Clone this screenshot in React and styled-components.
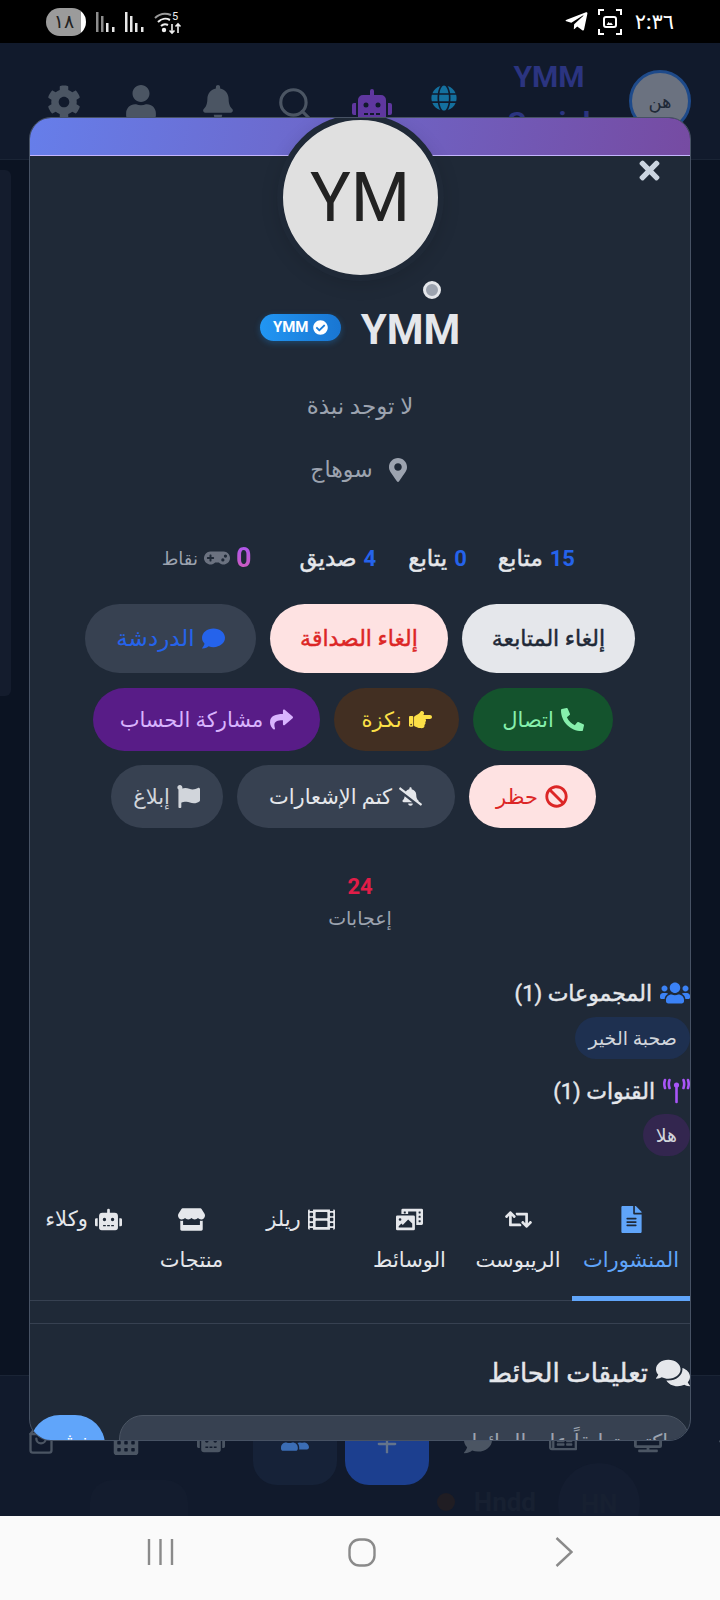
import React from "react"
import styled, { createGlobalStyle, css } from "styled-components"
import {
  FaBan, FaBell, FaBellSlash, FaCalendarAlt, FaCheckCircle, FaCog, FaComment, FaComments,
  FaFileAlt, FaFilm, FaFlag, FaGamepad, FaGlobe, FaHandPointRight, FaHome, FaMapMarkerAlt,
  FaPhoneAlt, FaPhotoVideo, FaRegNewspaper, FaRetweet, FaRobot, FaShare,
  FaStore, FaTelegramPlane, FaTimes, FaTv, FaUser, FaUserFriends, FaUsers,
} from "react-icons/fa"
import { FiPlus, FiSearch, FiShoppingBag } from "react-icons/fi"

const Global = createGlobalStyle`
  html, body { margin: 0; padding: 0; background: #000; }
  #root { width: 720px; height: 1600px; overflow: hidden; }
  * { box-sizing: border-box; }
`

// DejaVu's bold Arabic is far heavier than the reference, so thicken the regular cut a little
const semiBold = css`
  font-weight: 400;
  -webkit-text-stroke: 0.45px currentColor;
`

const Phone = styled.div`
  width: 720px;
  height: 1600px;
  display: flex;
  flex-direction: column;
  font-family: Roboto, "Noto Sans", "DejaVu Sans", sans-serif;
`

const StatusBar = styled.div`
  height: 43px;
  background: #000;
  display: flex;
  align-items: center;
  justify-content: space-between;
  padding: 0 46px;
  color: #fff;
  flex: none;
`

const StatusGroup = styled.div`
  display: flex;
  align-items: center;
  gap: ${(p) => p.$gap || 8}px;
`

const BatteryPill = styled.div`
  width: 40px;
  height: 28px;
  margin-right: 2px;
  border-radius: 14px;
  background: linear-gradient(90deg, #9b9b9b 88%, #fff 88%);
  color: #222;
  font-size: 19px;
  display: flex;
  align-items: center;
  justify-content: center;
  padding-right: 4px;
`

const Clock = styled.div`
  font-size: 21px;
  font-weight: 500;
  margin-left: 4px;
  direction: rtl;
`

const Screen = styled.div`
  position: relative;
  flex: 1;
  display: flex;
  flex-direction: column;
  background: #0b1322;
  overflow: hidden;
`

const AppHeader = styled.div`
  height: 117px;
  background: #111a2c;
  border-bottom: 1px solid #1a2435;
  display: flex;
  align-items: flex-start;
  padding: 24px 29px 0 25px;
  flex: none;
`

const HeadIcon = styled.div`
  width: ${(p) => p.$w || 77}px;
  padding-top: 18px;
  display: flex;
  justify-content: center;
  font-size: ${(p) => p.$size || 34}px;
  color: ${(p) => p.$color || "#4b5563"};
`

const Brand = styled.div`
  width: 110px;
  margin: -13px 0 0 17px;
  text-align: center;
  font-size: 30px;
  font-weight: 700;
  line-height: 46px;
  color: #2b3480;
`

const SmallAvatar = styled.div`
  width: 62px;
  height: 62px;
  margin-left: auto;
  margin-top: 3px;
  border-radius: 50%;
  border: 3px solid #1e4a8a;
  background: #6b7280;
  color: #1f2937;
  font-size: 18px;
  display: flex;
  align-items: center;
  justify-content: center;
`

const Body = styled.div`
  flex: 1;
  padding-top: 10px;
`

const Rail = styled.div`
  width: 11px;
  height: 526px;
  border-radius: 0 6px 6px 0;
  background: #141c2d;
`

const BottomNav = styled.div`
  height: 141px;
  background: #111a2c;
  border-top: 1px solid #1a2435;
  overflow: hidden;
  flex: none;
`

const NavRow = styled.div`
  height: 109px;
  display: flex;
  align-items: flex-end;
  margin-left: -2px;
`

const NavItem = styled.div`
  width: ${(p) => p.$w || 85}px;
  height: 100px;
  display: flex;
  justify-content: center;
  align-items: flex-end;
  padding-bottom: ${(p) => p.$pad || 30}px;
  flex: none;
  font-size: 28px;
  color: ${(p) => p.$color || "#4b5563"};
  background: ${(p) => p.$bg || "transparent"};
  border-radius: 24px;
  margin-right: ${(p) => p.$gap || 0}px;
`

const StoryRow = styled.div`
  margin-top: -22px;
  height: 60px;
  display: flex;
  align-items: flex-start;
  padding: 0 80px 0 90px;
  gap: 22px;
  color: #172031;
  font-size: 26px;
  font-weight: 700;
`

const StoryCard = styled.div`
  width: 98px;
  height: 60px;
  margin-top: 17px;
  margin-right: auto;
  border-radius: 22px;
  background: #131c2e;
`

const StoryName = styled.div`
  margin-top: 24px;
  display: flex;
  align-items: center;
  gap: 19px;
`

const StoryDot = styled.span`
  width: 18px;
  height: 18px;
  border-radius: 50%;
  background: #201d23;
`

const StoryAvatar = styled.div`
  width: 82px;
  height: 82px;
  border-radius: 50%;
  background: #141d30;
  display: flex;
  align-items: center;
  justify-content: center;
`

const Modal = styled.div`
  position: absolute;
  top: 74px;
  left: 29px;
  width: 662px;
  height: 1324px;
  background: #1f2937;
  border: 1px solid #475264;
  border-radius: 22px;
  overflow: hidden;
  direction: rtl;
`

const ModalTop = styled.div`
  height: 38px;
  background: linear-gradient(100deg, #667eea, #764ba2);
  border-bottom: 1px solid #c4b5fd;
`

const CloseButton = styled.div`
  position: absolute;
  top: 38px;
  left: 605px;
  color: #cbd5e1;
  font-size: 29px;
  line-height: 1;
`

const AvatarWrap = styled.div`
  position: relative;
  width: 167px;
  height: 167px;
  margin: -42px auto 0;
`

const Avatar = styled.div`
  width: 167px;
  height: 167px;
  border-radius: 50%;
  border: 6px solid #1f2937;
  background: #e0e0e0;
  color: #222;
  font-size: 68px;
  display: flex;
  align-items: center;
  justify-content: center;
  box-shadow: 0 4px 18px rgba(0, 0, 0, 0.12);
`

const StatusDot = styled.span`
  position: absolute;
  top: 167px;
  left: 146px;
  width: 18px;
  height: 18px;
  border-radius: 50%;
  border: 3px solid #e5e7eb;
  background: #9ca3af;
`

const NameRow = styled.div`
  margin-top: 23px;
  height: 50px;
  display: flex;
  align-items: center;
  justify-content: center;
  gap: 20px;
`

const Name = styled.div`
  font-size: 42px;
  font-weight: 700;
  color: #e5e7eb;
`

const Badge = styled.div`
  width: 81px;
  height: 27px;
  margin-top: -4px;
  border-radius: 14px;
  background: linear-gradient(90deg, #2196f3, #1976d2);
  box-shadow: 0 2px 6px rgba(33, 150, 243, 0.3);
  color: #fff;
  font-size: 15px;
  font-weight: 700;
  display: flex;
  align-items: center;
  justify-content: center;
  gap: 4px;
  direction: ltr;
`

const Bio = styled.div`
  margin-top: 38px;
  height: 30px;
  line-height: 30px;
  text-align: center;
  color: #9ca3af;
  font-size: 23px;
`

const Location = styled(Bio)`
  margin-top: 33px;
  display: flex;
  align-items: center;
  justify-content: center;
  gap: 13px;
  font-size: 22px;
  svg { font-size: 24px; }
`

const Stats = styled.div`
  margin-top: 58px;
  height: 30px;
  display: flex;
  align-items: center;
  padding-right: 115px;
`

const Stat = styled.div`
  display: flex;
  align-items: center;
  gap: 7px;
  margin-left: ${(p) => p.$gap}px;
  font-size: 23px;
  color: #e5e7eb;
  ${semiBold}
`

const StatNum = styled.span`
  font-size: 22px;
  font-weight: 700;
  -webkit-text-stroke: 0;
  color: #2563eb;
`

const Points = styled.div`
  display: flex;
  align-items: center;
  gap: 6px;
  color: #9ca3af;
  font-size: 18px;
`

const PointNum = styled.span`
  font-size: 27px;
  font-weight: 700;
  background: linear-gradient(180deg, #a855f7, #d65db1);
  -webkit-background-clip: text;
  background-clip: text;
  color: transparent;
`

const ButtonRow = styled.div`
  margin-top: ${(p) => p.$top}px;
  padding-right: ${(p) => p.$inset || 0}px;
  display: flex;
  justify-content: center;
  gap: 14px;
`

const ActionButton = styled.div`
  width: ${(p) => p.$w}px;
  height: ${(p) => p.$h || 63}px;
  border-radius: 35px;
  background: ${(p) => p.$bg};
  color: ${(p) => p.$color};
  font-size: ${(p) => p.$size || 21}px;
  display: flex;
  align-items: center;
  justify-content: center;
  gap: 7px;
  ${(p) => p.$bold && semiBold}
  svg { font-size: 23px; }
`

const Likes = styled.div`
  margin-top: 45px;
  text-align: center;
`

const LikeNum = styled.div`
  font-size: 22px;
  line-height: 28px;
  font-weight: 700;
  color: #e11d48;
`

const LikeLabel = styled.div`
  margin-top: 6px;
  font-size: 19px;
  line-height: 24px;
  color: #9ca3af;
`

const SectionTitle = styled.div`
  margin-top: ${(p) => p.$top}px;
  height: 30px;
  display: flex;
  align-items: center;
  gap: 8px;
  font-size: 22px;
  color: #e5e7eb;
  ${semiBold}
  svg { flex: none; font-size: ${(p) => p.$icon || 30}px; color: ${(p) => p.$color}; }
`

const Chip = styled.div`
  display: inline-flex;
  align-items: center;
  height: 42px;
  margin-top: ${(p) => p.$top}px;
  padding: 0 13px;
  border-radius: 21px;
  background: ${(p) => p.$bg};
  color: #d1d5db;
  font-size: 19px;
`

const Tabs = styled.div`
  margin-top: 50px;
  height: 95px;
  display: grid;
  grid-template-columns: 118px 108px 109px 109px 109px 107px;
  border-bottom: 1px solid #374151;
`

const Tab = styled.div`
  height: 95px;
  display: flex;
  flex-direction: ${(p) => (p.$inline ? "row" : "column")};
  justify-content: ${(p) => (p.$inline ? "center" : "flex-start")};
  align-items: ${(p) => (p.$inline ? "flex-start" : "center")};
  gap: ${(p) => (p.$inline ? 7 : 14)}px;
  color: ${(p) => (p.$active ? "#60a5fa" : "#e5e7eb")};
  border-bottom: ${(p) => (p.$active ? "5px solid #60a5fa" : "0")};
  font-size: 21px;
  line-height: 26px;
  white-space: nowrap;
  svg { font-size: 27px; flex: none; }
`

const Divider = styled.div`
  margin-top: 22px;
  height: 1px;
  background: #374151;
`

const WallTitle = styled(SectionTitle)`
  font-size: 26px;
  gap: 8px;
`

const WallForm = styled.div`
  margin-top: 27px;
  display: flex;
  gap: 14px;
  padding-right: 1px;
`

const WallInput = styled.div`
  flex: 1;
  height: 70px;
  border-radius: 24px;
  background: #374151;
  border: 1px solid #4b5563;
  color: #9ca3af;
  font-size: 21px;
  padding: 14px 20px;
`

const WallSend = styled.div`
  width: 75px;
  height: 70px;
  border-radius: 30px;
  background: #60a5fa;
  color: #fff;
  font-size: 21px;
  font-weight: 700;
  text-align: center;
  padding-top: 14px;
`

const NavBar = styled.div`
  height: 84px;
  background: #fafafa;
  display: flex;
  align-items: center;
  padding: 0 0 12px 147px;
  flex: none;
`

const NavKey = styled.div`
  display: flex;
  margin-left: ${(p) => p.$left || 0}px;
`

function SignalBars({ dim }) {
  return (
    <svg width="21" height="22" viewBox="0 0 21 22">
      <g fill={dim ? "#8c8c8c" : "#e8e8e8"}>
        <rect x="0" y="1" width="2.5" height="20" />
        <rect x="5" y="5" width="2.5" height="16" />
      </g>
      <g fill="#e8e8e8">
        <rect x="10" y="12" width="2.5" height="9" />
        <rect x="16" y="16" width="2.5" height="5" />
      </g>
    </svg>
  )
}

function WifiIcon() {
  return (
    <svg width="28" height="26" viewBox="0 0 28 26" fill="none" stroke="#eee" strokeWidth="2">
      <path d="M1 9a15 15 0 0 1 16-3" stroke="#999" />
      <path d="M4 13a10 10 0 0 1 12-2" />
      <path d="M7 17a6 6 0 0 1 7-1" />
      <circle cx="10" cy="21" r="1.2" fill="#eee" />
      <path d="M18 15v9m-2.5-2.5 2.5 2.5 2.5-2.5M24 24v-9m-2.5 2.5 2.5-2.5 2.5 2.5" strokeWidth="1.6" />
      <text x="18" y="11" fontSize="11" fill="#eee" stroke="none" fontFamily="Roboto, sans-serif">5</text>
    </svg>
  )
}

function CaptureIcon() {
  return (
    <svg width="24" height="26" viewBox="0 0 24 26" fill="none" stroke="#fff" strokeWidth="2">
      <path d="M6 1H1v5M18 1h5v5M6 25H1v-5M18 25h5v-5" />
      <rect x="6" y="8" width="12" height="10" rx="2" />
      <path d="M8.5 16l2-3 1.5 1.5 1-1 2 2.5z" fill="#fff" stroke="none" />
    </svg>
  )
}

// tower with two pairs of signal arcs, the package's tower icon has the wrong shape
function ChannelIcon() {
  return (
    <svg width="27" height="26" viewBox="0 0 27 26" fill="none" stroke="currentColor" strokeWidth="2.6" strokeLinecap="round">
      <path d="M13.5 9v15" />
      <circle cx="13.5" cy="7" r="2.6" fill="currentColor" stroke="none" />
      <path d="M2 2q-1.4 4 0 8M6.5 2q-1.4 4 0 8M20.5 2q1.4 4 0 8M25 2q1.4 4 0 8" />
    </svg>
  )
}

function RecentsIcon() {
  return (
    <svg width="27" height="28" viewBox="0 0 27 28" stroke="#8a8a8a" strokeWidth="2.4">
      <path d="M2 1v26M13.5 1v26M25 1v26" />
    </svg>
  )
}

function HomeKey() {
  return (
    <svg width="28" height="29" viewBox="0 0 28 29" fill="none" stroke="#8a8a8a" strokeWidth="2.4">
      <rect x="1.5" y="1.5" width="25" height="26" rx="10" />
    </svg>
  )
}

function BackKey() {
  return (
    <svg width="18" height="30" viewBox="0 0 18 30" fill="none" stroke="#8a8a8a" strokeWidth="2.4">
      <path d="M1.5 1 16.5 15 1.5 29" />
    </svg>
  )
}

export default function App() {
  return (
    <Phone>
      <Global />
      <StatusBar>
        <StatusGroup $gap={8}>
          <BatteryPill>١٨</BatteryPill>
          <SignalBars dim />
          <SignalBars />
          <WifiIcon />
        </StatusGroup>
        <StatusGroup $gap={9}>
          <FaTelegramPlane size={25} />
          <CaptureIcon />
          <Clock>٢:٣٦</Clock>
        </StatusGroup>
      </StatusBar>

      <Screen>
        <AppHeader>
          <HeadIcon><FaCog /></HeadIcon>
          <HeadIcon><FaUser /></HeadIcon>
          <HeadIcon><FaBell /></HeadIcon>
          <HeadIcon $size={38}><FiSearch /></HeadIcon>
          <HeadIcon $size={40} $color="#5f379f"><FaRobot /></HeadIcon>
          <HeadIcon $w={67} $size={26} $color="#14709f"><FaGlobe /></HeadIcon>
          <Brand>YMM Social</Brand>
          <SmallAvatar>هن</SmallAvatar>
        </AppHeader>
        <Body>
          <Rail />
        </Body>
        <BottomNav>
          <NavRow>
            <NavItem><FiShoppingBag /></NavItem>
            <NavItem><FaCalendarAlt /></NavItem>
            <NavItem><FaRobot /></NavItem>
            <NavItem $w={84} $gap={8} $bg="#162238" $color="#3b6db5"><FaUserFriends /></NavItem>
            <NavItem $w={84} $gap={6} $bg="#1c3f8f" $color="#64748b" $pad={27}><FiPlus /></NavItem>
            <NavItem><FaComment /></NavItem>
            <NavItem><FaRegNewspaper /></NavItem>
            <NavItem><FaTv /></NavItem>
            <NavItem><FaHome /></NavItem>
          </NavRow>
          <StoryRow>
            <StoryCard />
            <StoryName><StoryDot />Hndd</StoryName>
            <StoryAvatar>HN</StoryAvatar>
          </StoryRow>
        </BottomNav>

        <Modal>
          <ModalTop />
          <CloseButton><FaTimes /></CloseButton>
          <AvatarWrap>
            <Avatar>YM</Avatar>
            <StatusDot />
          </AvatarWrap>
          <NameRow>
            <Name>YMM</Name>
            <Badge>YMM <FaCheckCircle size={15} /></Badge>
          </NameRow>
          <Bio>لا توجد نبذة</Bio>
          <Location><FaMapMarkerAlt />سوهاج</Location>
          <Stats>
            <Stat $gap={31}><StatNum>15</StatNum>متابع</Stat>
            <Stat $gap={32}><StatNum>0</StatNum>يتابع</Stat>
            <Stat $gap={48}><StatNum>4</StatNum>صديق</Stat>
            <Points><PointNum>0</PointNum><FaGamepad size={26} color="#6b7280" />نقاط</Points>
          </Stats>

          <ButtonRow $top={31}>
            <ActionButton $w={173} $h={69} $size={22} $bg="#e5e7eb" $color="#1f2937" $bold>إلغاء المتابعة</ActionButton>
            <ActionButton $w={178} $h={69} $size={22} $bg="#fee2e2" $color="#dc2626" $bold>إلغاء الصداقة</ActionButton>
            <ActionButton $w={171} $h={69} $size={23} $bg="#374151" $color="#2563eb"><FaComment />الدردشة</ActionButton>
          </ButtonRow>
          <ButtonRow $top={15} $inset={14}>
            <ActionButton $w={140} $bg="#14532d" $color="#86efac"><FaPhoneAlt />اتصال</ActionButton>
            <ActionButton $w={125} $bg="#422f22" $color="#fde047"><FaHandPointRight />نكزة</ActionButton>
            <ActionButton $w={227} $bg="#581c87" $color="#d8b4fe"><FaShare />مشاركة الحساب</ActionButton>
          </ButtonRow>
          <ButtonRow $top={14} $inset={14}>
            <ActionButton $w={127} $bg="#fee2e2" $color="#dc2626"><FaBan />حظر</ActionButton>
            <ActionButton $w={218} $bg="#374151" $color="#e5e7eb"><FaBellSlash />كتم الإشعارات</ActionButton>
            <ActionButton $w={112} $bg="#374151" $color="#d1d5db"><FaFlag />إبلاغ</ActionButton>
          </ButtonRow>

          <Likes>
            <LikeNum>24</LikeNum>
            <LikeLabel>إعجابات</LikeLabel>
          </Likes>

          <SectionTitle $top={47} $color="#3b82f6">
            <FaUsers />المجموعات (1)
          </SectionTitle>
          <Chip $top={9} $bg="#1e3050">صحبة الخير</Chip>
          <SectionTitle $top={17} $color="#a855f7">
            <ChannelIcon />القنوات (1)
          </SectionTitle>
          <Chip $top={8} $bg="#33264f">هلا</Chip>

          <Tabs>
            <Tab $active><FaFileAlt />المنشورات</Tab>
            <Tab><FaRetweet />الريبوست</Tab>
            <Tab><FaPhotoVideo />الوسائط</Tab>
            <Tab $inline><FaFilm />ريلز</Tab>
            <Tab><FaStore />منتجات</Tab>
            <Tab $inline><FaRobot />وكلاء</Tab>
          </Tabs>
          <Divider />
          <WallTitle $top={34} $color="#e5e7eb" $icon={34}>
            <FaComments />تعليقات الحائط
          </WallTitle>
          <WallForm>
            <WallInput>اكتب تعليقاً على الحائط...</WallInput>
            <WallSend>نشر</WallSend>
          </WallForm>
        </Modal>
      </Screen>

      <NavBar>
        <NavKey><RecentsIcon /></NavKey>
        <NavKey $left={174}><HomeKey /></NavKey>
        <NavKey $left={179}><BackKey /></NavKey>
      </NavBar>
    </Phone>
  )
}
